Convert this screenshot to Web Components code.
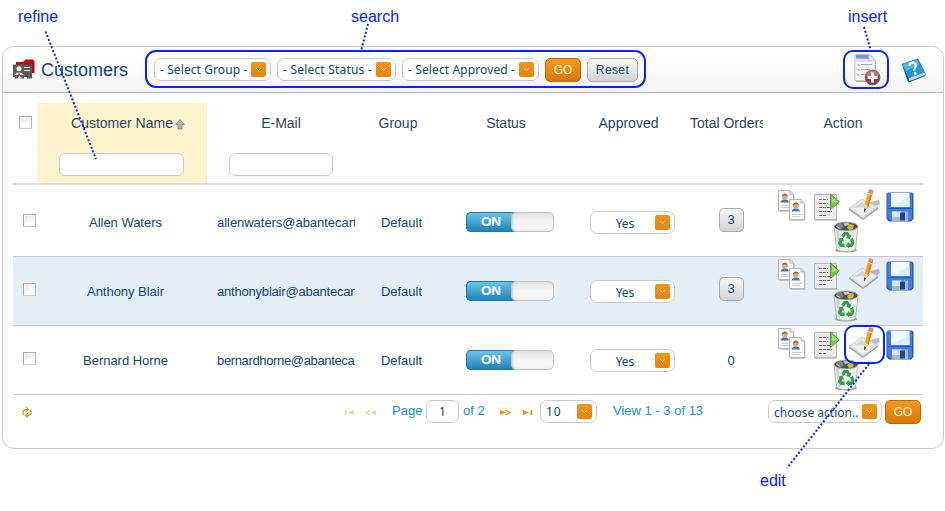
<!DOCTYPE html>
<html lang="en"><head><meta charset="utf-8"><title>Customers</title>
<style>
body{margin:0;width:945px;height:511px;overflow:hidden;background:#fff;position:relative;font-family:"Liberation Sans",Arial,sans-serif}
</style></head><body>
<customers-page></customers-page>
<script>
const def=(name,html,setup)=>{
  const t=document.createElement('template');t.innerHTML=html;
  customElements.define(name,class extends HTMLElement{
    connectedCallback(){
      if(this.shadowRoot)return;
      const r=this.attachShadow({mode:'open'});r.append(t.content.cloneNode(true));
      if(setup)setup(this,r);
    }
  });
};
const card=(x,y)=>`<g transform="translate(${x} ${y})"><path d="M1.5 1.500H13L16.500 5V22H1.500Z" fill="#a8a8a8" opacity=".6"/><path d="M.5.5H12L15.500 4V20.500H.5Z" fill="#fff" stroke="#b5b5b5"/><path d="M12 .5V4H15.500" fill="#ddd" stroke="#b5b5b5"/><path d="M2.500 12.500C3 8 10.500 8 11 12.500Z" fill="#3e78b8"/><circle cx="6.800" cy="6.800" r="3" fill="#e2ac72"/><path d="M4 6.500C4 2.500 9.600 2.500 9.600 6.500L8.500 5.500H5.500Z" fill="#95643b"/><path d="M3 15.500H13M3 17.500H11" stroke="#c5ccd6"/></g>`;
const ICONS={
people:[22,21,`<path d="M3 7V3H10L12.500.5H20L21.500 2V14H19V7Z" fill="#bd0710"/><path d="M0 5.500H19V19.500H14V18H11V19.500H7L6 17 4.500 19.500H2V18H0Z" fill="#5b5b5d"/><circle cx="6" cy="9.800" r="2.500" fill="#fff"/><path d="M1.500 16C2 12.500 10 12.500 10.500 16Z" fill="#fff"/><path d="M6 13L7.500 17 5 16Z" fill="#d4373c"/><path d="M11 8.500H17M11 11.500H17" stroke="#fff"/><path d="M4.500 19.500L6.500 16.500 9 19.500Z" fill="#efd0d0"/>`],
contacts:[28,31,card(0,0)+card(11,9)],
script:[26,28,`<path d="M1 2H20L23 4V27.500H1Z" fill="#999"/><path d="M.5 1.500H22.500V26.500H.5Z" fill="#eaeaea" stroke="#b4b4b4"/><path d="M5 6.500H14M5 10.500H14M5 14.500H18M5 18.500H18M5 22.500H13" stroke="#777" stroke-dasharray="3 1"/><path d="M16.500 1L25.300 8.800 16.500 16.500Z" fill="#79c44d" stroke="#4f9c2f"/><path d="M18 4L23 8.500 18 10Z" fill="#a9e07b"/>`],
edit:[33,31,`<path d="M18 13L31 10 32 14 17 22Z" fill="#999" opacity=".65"/><path d="M1 18L14 8.500 30 17 15 28.500Z" fill="#d3d9df"/><path d="M1 18V20L15 30 30 19V17L15 28.500Z" fill="#979fa8"/><path d="M3 18L14 10 27 17 15 26.500Z" fill="#edf0f3"/><path d="M5 18L14 12 23 17Z" fill="#d0d6de"/><path d="M17 14L20 2 24.500 3.200 20.300 17 16.500 21Z" fill="#f7a71a"/><path d="M22.500 3L24.500 3.200 20.300 17 19 17.500Z" fill="#d97d0d"/><path d="M20 2.500L20.900-.2C22-.8 24.500-.2 25.500 1L24.500 4.200Z" fill="#ed8270"/><path d="M19.500 3.200L24.300 5" stroke="#f7f2df"/><path d="M17 14L19 16 20.300 16.500 16.500 21Z" fill="#ead1a5"/><path d="M16.300 18L18 19.500 16 22.500Z" fill="#222"/>`],
save:[28,30,`<path d="M2 .5H26L27.500 2V27L25 29.500H3L.5 27V2Z" fill="#2857af"/><path d="M2.500 1H25L26 2.500V27L24 28.500H4.500L1.500 26V2Z" fill="#437ede"/><path d="M5 1H23.500V15H5Z" fill="#f0f9fd"/><path d="M5 15L23.500 5V15Z" fill="#dbf0f9"/><path d="M6 19.500H22V29.500H6Z" fill="#aab8c2"/><path d="M6 19.500H15V25H6Z" fill="#dde4e8"/><path d="M14 20.500H19V28.500H14Z" fill="#164b94"/><path d="M2 16.500H26" stroke="#225fc4"/>`],
trash:[26,32,`<ellipse cx="13" cy="29" rx="11" ry="2.500" fill="#999"/><path d="M1 5H25L22.500 28C19 31.500 7 31.500 3.500 28Z" fill="#eceeee" stroke="#b3b6b6"/><path d="M3 9L5 27 7 29 6 9Z" fill="#cdd0d0"/><ellipse cx="13" cy="5.500" rx="12" ry="4.500" fill="#4b5052" stroke="#bbb"/><path d="M3 4L8 1.500 11 6 7 9Z" fill="#7b8588"/><path d="M10 2.500L15 1.500 17 4 12 5Z" fill="#bbc8ce"/><path d="M14 6.500L17 3 21 4 20 8 16 9Z" fill="#d7ba21"/><path d="M3.500 5.500L7 7.500" stroke="#ddd"/><g fill="#2fa045"><path d="M8.300 14.500L11 11H15L17 14.300 18.500 13.500 17 18 12.800 17 14.500 16 13 13.500 10.800 17Z"/><path d="M5.500 17.500L9.800 16.500 11 20.800 9.500 20 8.300 22.500H11.500V26H7.500L4.800 22.500 6.500 18.800Z"/><path d="M17 18.500L20 17 21.500 22 19 26H16V27.500L12.800 24.300 16 21V22.500H18.500Z"/></g>`],
insert:[28,32,`<path d="M3 1H18L23 7V28H3Z" fill="#aaa"/><path d="M2 .5H16.500L22 6V26.500H2Z" fill="#f7f7f8" stroke="#c2c2c7"/><path d="M3 1H16L18 5H3Z" fill="#7f8de8"/><path d="M3 4.500L17 5V8H3Z" fill="#dce1fa"/><path d="M16 .5L15.500 6.500 22 6Z" fill="#fff" stroke="#bbb"/><g fill="#aaa"><path d="M4.500 10h2v1.500h-2zM8 10h11v1h-11zM4.500 15h2v1.500h-2zM8 15h9v1h-9zM4.500 20h2v1.500h-2zM8 20h5v1h-5z"/></g><circle cx="19.500" cy="23.500" r="7.400" fill="#8e4036" stroke="#77665f"/><path d="M13 22C14 15 25 15 26 22Z" fill="#b97970"/><path d="M18 18.500H21V22H24.500V25H21V28.500H18V25H14.500V22H18Z" fill="#fff"/>`],
book:[25,25,`<path d="M1 6L17 .5 24.500 15.500V18L8 24.500 6.500 23Z" fill="#176aa5"/><path d="M7.500 20L23.500 14.500 24 17 8 23Z" fill="#f1f1ea"/><path d="M8 21.500L23.500 16" stroke="#aaa" stroke-width=".6"/><path d="M.7 6L16.500.7 23.700 14.500 7.500 20.200Z" fill="#2398d7"/><path d="M.7 6L7.500 20.200 8 22.500 6.800 21.500Z" fill="#0a5385"/><path d="M2 6.500L16 2 18 6 5 13Z" fill="#51b7e7"/><path d="M8.500 8C8 3.800 14.500 3.700 14.800 7.300 15 10 12.600 9.800 13.300 12.700" fill="none" stroke="#fff" stroke-width="2.200"/><circle cx="14.200" cy="15.500" r="1.400" fill="#fff"/>`],
first:[9,5,`<path d="M0 0H1.500V5H0ZM9 0V5L3 2.500Z" fill="#fbce98"/>`],
prev:[11,5,`<path d="M11 0V5L5.500 2.500Z" fill="#fbce98"/><path d="M5 .3L1 2.500 5 4.700" fill="none" stroke="#fbce98" stroke-width="1.300"/>`],
next:[11,5,`<path d="M0 0V5L6 2.500Z" fill="#f18a00"/><path d="M6 .3L10 2.500 6 4.700" fill="none" stroke="#f18a00" stroke-width="1.300"/>`],
last:[9,5,`<path d="M7.500 0H9V5H7.500ZM0 0V5L6 2.500Z" fill="#f18a00"/>`],
refresh:[10,11,`<path d="M1.500 8C-.5 4.500 2 2 6 2.500M4 .3L6.300 2.500 4 4.800M8 3C10.500 6 8 9 4 8.500M6 6.200L3.700 8.500 6 10.800" fill="none" stroke="#f28c05" stroke-width="1.200"/>`],
sort:[10,11,`<path d="M5 .7L9.300 5.300H7V10H3V5.300H.7Z" fill="#b5b5b5" stroke="#85858a"/>`]
};
def('ui-icon','<style>:host{display:block;flex:none}svg{display:block;overflow:visible}</style>',(h,r)=>{
  const [w,y,b]=ICONS[h.getAttribute('name')];
  r.innerHTML+=`<svg width="${w}" height="${y}" viewBox="0 0 ${w} ${y}">${b}</svg>`;
});
def('ui-select',`<style>:host{display:flex;flex:none;box-sizing:border-box;height:23px;border:1px solid #c9c9d1;border-radius:7px;background:#fff;align-items:center;padding:0 4px 0 5px;font:12px "Noto Sans","Open Sans",sans-serif;color:#0f4578;white-space:nowrap}
span{flex:1;line-height:21px;padding-top:1px;letter-spacing:var(--ls,0);text-align:var(--ta,left)}
i{flex:none;width:15px;height:15px;border-radius:2px;background:linear-gradient(#f2941c,#e4830e);display:flex;align-items:center;justify-content:center}</style><span><slot></slot></span><i><svg width="7" height="5"><path d="M1 1L3.500 3.500 6 1" fill="none" stroke="#ffe3bd"/></svg></i>`);
def('ui-button',`<style>:host{display:flex;flex:none;box-sizing:border-box;height:24px;border:1px solid #a9a9ab;border-radius:5px;background:linear-gradient(#f8f8f9,#d3d3d5);align-items:center;justify-content:center;font-size:12px;color:#0f4578}
:host([kind=go]){background:linear-gradient(#f79a20,#d87804);border-color:#bd6b08;color:#fff1dc}</style><slot></slot>`);
def('ui-check',`<style>:host{display:block;flex:none;box-sizing:border-box;width:13px;height:13px;border:1px solid #a8a8a8;border-bottom-color:#ccc;border-right-color:#bbb;background:linear-gradient(160deg,#e4e4e4,#fff 70%);box-shadow:inset 0 0 0 1px #f8f8f8}</style>`);
def('ui-input',`<style>:host{display:flex;flex:none;box-sizing:border-box;height:23px;border:1px solid #c9c9d1;border-radius:6px;background:#fff;align-items:center;justify-content:center;font:12px "Noto Sans",sans-serif;color:#0f4578}</style><slot></slot>`);
def('ui-toggle',`<style>:host{display:flex;flex:none;box-sizing:border-box;width:88px;height:20px;border-radius:5px;background:linear-gradient(90deg,#2d8fbe 60%,transparent 60%)}
b{width:46px;box-sizing:border-box;border:1px solid #2679a6;border-right:0;border-radius:5px 0 0 5px;background:linear-gradient(#6bc3ea,#1d84b5);color:#fff;font-size:13.500px;line-height:18px;text-align:center;padding-left:4px;letter-spacing:-.2px}
i{flex:1;box-sizing:border-box;border:1px solid #c3c3c6;border-radius:5px;background:linear-gradient(#e4e4e5,#f5f5f5 50%);box-shadow:inset 1px 0 2px #ccc;margin-left:-1px}</style><b><slot></slot></b><i></i>`);
def('panel-header',`<style>:host{display:flex;align-items:center;height:46px;box-sizing:border-box;border-bottom:1px solid #b9b9bb;border-radius:12px 12px 0 0;background:linear-gradient(#fff 25%,#f2f2f3);padding:0 17px 0 10px}
h1{margin:0 0 0 6px;width:113px;font-weight:400;font-size:18px;line-height:24px;color:#0f4578}
.s{display:flex;gap:6px;flex:1;align-items:flex-start}.r{display:flex;align-items:center;gap:20px}</style>
<ui-icon name="people"></ui-icon><h1>Customers</h1>
<div class="s"><ui-select style="width:117px;--ls:.09px">- Select Group -</ui-select><ui-select style="width:119px;--ls:.2px">- Select Status -</ui-select><ui-select style="width:137px;--ls:.12px">- Select Approved -</ui-select><ui-button kind="go" style="width:36px">GO</ui-button><ui-button style="width:51px;letter-spacing:.4px">Reset</ui-button></div>
<div class="r"><ui-icon name="insert"></ui-icon><ui-icon name="book" style="margin-top:1px"></ui-icon></div>`);
const COLS='24px 170px 148px 86px 130px 115px 77px 160px';
def('grid-head',`<style>:host{display:grid;grid-template-columns:${COLS};height:82px;box-sizing:border-box;border-bottom:2px solid #ddd;font-size:14px;line-height:18px;color:#2b4566}
div{padding-top:11px;display:flex;flex-direction:column;align-items:center;gap:21px;white-space:nowrap;overflow:hidden}
.n{background:#fdf4cd;padding-right:2px}.n span{display:flex;align-items:center;gap:2px;padding-left:14px}.n ui-icon{margin-top:2px}.c{padding-top:13px}</style>
<div class="c"><ui-check></ui-check></div><div class="n"><span>Customer Name<ui-icon name="sort"></ui-icon></span><ui-input style="width:125px"></ui-input></div><div><span>E-Mail</span><ui-input style="width:104px"></ui-input></div><div>Group</div><div>Status</div><div>Approved</div><div style="align-items:flex-start;padding-left:4px">Total Orders</div><div>Action</div>`);
def('grid-row',`<style>:host{display:grid;grid-template-columns:${COLS};height:69px;box-sizing:border-box;border-bottom:1px solid #c9c9cf;font-size:13px;line-height:16px;color:#0f4578}
:host([first]){height:72px;padding-top:3px}:host([alt]){background:#e4eef6}
div{padding-left:7px;display:flex;align-items:center;justify-content:center;white-space:nowrap;overflow:hidden;min-width:0}
.t{padding-top:2px}.m{justify-content:flex-start;padding-left:10px}.k{padding:0 0 3px 8px}.o{padding:0 0 5px 13px;overflow:visible}.o.z{padding-bottom:0;padding-top:2px}
.a{padding:2px 0 0 6px;flex-wrap:wrap;align-content:flex-start;overflow:visible;justify-content:center}
.a span{width:36px;height:31px;display:flex;align-items:center;justify-content:center}.a .d{padding-top:2px;height:29px}</style>
<div class="k"><ui-check></ui-check></div><div class="t" style="letter-spacing:-.03px"><slot name="name"></slot></div><div class="t m"><slot name="mail"></slot></div><div class="t">Default</div><div><ui-toggle>ON</ui-toggle></div><div style="padding-top:1px"><ui-select style="width:85px;--ta:center">Yes</ui-select></div><div class="o"></div>
<div class="a"><span><ui-icon name="contacts"></ui-icon></span><span class="d"><ui-icon name="script" style="margin-left:-2px"></ui-icon></span><span><ui-icon name="edit"></ui-icon></span><span class="d"><ui-icon name="save"></ui-icon></span><span><ui-icon name="trash"></ui-icon></span></div>`,(h,r)=>{
  const n=h.getAttribute('orders'),o=r.querySelector('.o');
  if(n==='0'){o.textContent='0';o.classList.add('z')}else o.innerHTML=`<ui-button style="width:25px;font-size:13px">${n}</ui-button>`;
});
def('grid-pager',`<style>:host{display:flex;align-items:center;height:32px;font-size:13px;color:#2190c4;white-space:nowrap;padding-left:9px}
ui-icon{margin-top:2px}span{padding-bottom:2px}</style>
<ui-icon name="refresh"></ui-icon><ui-icon name="first" style="margin-left:313px"></ui-icon><ui-icon name="prev" style="margin-left:11px"></ui-icon><span style="margin-left:16px;width:34px">Page</span><ui-input style="width:33px">1</ui-input><span style="margin-left:4px;width:37px">of 2</span><ui-icon name="next"></ui-icon><ui-icon name="last" style="margin-left:12px"></ui-icon><ui-select style="width:57px;margin-left:8px;--ls:.8px">10</ui-select><span style="margin-left:16px;width:155px">View 1 - 3 of 13</span><ui-select style="width:114px;margin-top:1px">choose action..</ui-select><ui-button kind="go" style="width:36px;margin:2px 0 0 3px">GO</ui-button>`);
def('callout-layer',`<style>:host{position:absolute;inset:0;color:#0a22ff;font-size:16px;line-height:18px}svg,span{position:absolute;left:0;top:0}</style>
<svg width="945" height="511" fill="none" stroke="#0a22ff" stroke-width="2"><rect x="146" y="51" width="499" height="36" rx="10"/><rect x="844" y="51" width="44" height="37" rx="9"/><rect x="845" y="326" width="39" height="37" rx="9"/><g stroke-dasharray="2 2"><path d="M45.500 31.500L96 159M368 24L361 51M864 27L871 51M869 364L787 468"/></g></svg>
<span style="left:18px;top:8px">refine</span><span style="left:351px;top:8px">search</span><span style="left:848px;top:8px">insert</span><span style="left:760px;top:472px">edit</span>`);
def('customers-page',`<style>:host{display:block;padding:46px 0 0 2px}section{box-sizing:border-box;width:942px;height:403px;border:1px solid #c9c9d1;border-radius:12px}main{width:910px;margin:10px 0 0 10px}</style>
<section><panel-header></panel-header><main><grid-head></grid-head>
<grid-row first orders="3"><span slot="name">Allen Waters</span><span slot="mail" style="letter-spacing:-.04px">allenwaters@abantecart</span></grid-row>
<grid-row alt orders="3"><span slot="name">Anthony Blair</span><span slot="mail" style="letter-spacing:-.2px">anthonyblair@abantecar</span></grid-row>
<grid-row orders="0"><span slot="name">Bernard Horne</span><span slot="mail" style="letter-spacing:-.35px">bernardhorne@abanteca</span></grid-row>
<grid-pager></grid-pager></main></section><callout-layer></callout-layer>`);
</script></body></html>
